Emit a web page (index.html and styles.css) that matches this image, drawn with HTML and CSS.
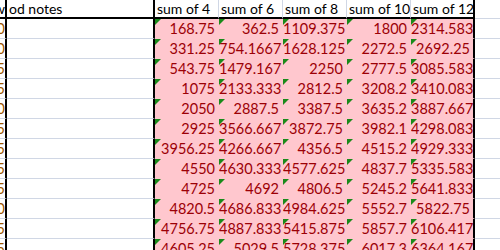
FILE: index.html
```html
<!DOCTYPE html>
<html>
<head>
<meta charset="utf-8">
<link rel="stylesheet" href="styles.css">
</head>
<body>
<div class="sheet">
  <div class="c a head"><span>w</span></div><div class="c notes head">od notes</div>
  <div class="c h">sum of 4</div><div class="c h">sum of 6</div><div class="c h">sum of 8</div><div class="c h">sum of 10</div><div class="c h last">sum of 12</div><div class="c fill head-fill"></div>

  <div class="c a"><span>0</span></div><div class="c notes"></div>
  <div class="c v">168.75</div><div class="c v">362.5</div><div class="c v">1109.375</div><div class="c v">1800</div><div class="c v last">2314.583</div><div class="c fill"></div>

  <div class="c a"><span>0</span></div><div class="c notes"></div>
  <div class="c v">331.25</div><div class="c v">754.1667</div><div class="c v">1628.125</div><div class="c v">2272.5</div><div class="c v last">2692.25</div><div class="c fill"></div>

  <div class="c a"><span>5</span></div><div class="c notes"></div>
  <div class="c v">543.75</div><div class="c v">1479.167</div><div class="c v">2250</div><div class="c v">2777.5</div><div class="c v last">3085.583</div><div class="c fill"></div>

  <div class="c a"><span>5</span></div><div class="c notes"></div>
  <div class="c v">1075</div><div class="c v">2133.333</div><div class="c v">2812.5</div><div class="c v">3208.2</div><div class="c v last">3410.083</div><div class="c fill"></div>

  <div class="c a"><span>0</span></div><div class="c notes"></div>
  <div class="c v">2050</div><div class="c v">2887.5</div><div class="c v">3387.5</div><div class="c v">3635.2</div><div class="c v last">3887.667</div><div class="c fill"></div>

  <div class="c a"><span>5</span></div><div class="c notes"></div>
  <div class="c v">2925</div><div class="c v">3566.667</div><div class="c v">3872.75</div><div class="c v">3982.1</div><div class="c v last">4298.083</div><div class="c fill"></div>

  <div class="c a"><span>5</span></div><div class="c notes"></div>
  <div class="c v">3956.25</div><div class="c v">4266.667</div><div class="c v">4356.5</div><div class="c v">4515.2</div><div class="c v last">4929.333</div><div class="c fill"></div>

  <div class="c a"><span>5</span></div><div class="c notes"></div>
  <div class="c v">4550</div><div class="c v">4630.333</div><div class="c v">4577.625</div><div class="c v">4837.7</div><div class="c v last">5335.583</div><div class="c fill"></div>

  <div class="c a"><span>5</span></div><div class="c notes"></div>
  <div class="c v">4725</div><div class="c v">4692</div><div class="c v">4806.5</div><div class="c v">5245.2</div><div class="c v last">5641.833</div><div class="c fill"></div>

  <div class="c a"><span>0</span></div><div class="c notes"></div>
  <div class="c v">4820.5</div><div class="c v">4686.833</div><div class="c v">4984.625</div><div class="c v">5552.7</div><div class="c v last">5822.75</div><div class="c fill"></div>

  <div class="c a"><span>5</span></div><div class="c notes"></div>
  <div class="c v">4756.75</div><div class="c v">4887.833</div><div class="c v">5415.875</div><div class="c v">5857.7</div><div class="c v last">6106.417</div><div class="c fill"></div>

  <div class="c a"><span>5</span></div><div class="c notes"></div>
  <div class="c v">4605.25</div><div class="c v">5029.5</div><div class="c v">5728.375</div><div class="c v">6017.3</div><div class="c v last">6364.167</div><div class="c fill"></div>
</div>
</body>
</html>
```

FILE: styles.css
```css
html, body {
  margin: 0;
  padding: 0;
  background: #ffffff;
  overflow: hidden;
}

.sheet {
  display: grid;
  grid-template-columns: 7px 148px repeat(5, 64px) 1fr;
  grid-template-rows: 19px repeat(12, 20px);
  width: 500px;
  font-family: "Lato", "Liberation Sans", sans-serif;
  font-size: 14px;
  color: #000000;
}

.c {
  box-sizing: border-box;
  border-right: 1px solid #d0d7e5;
  border-bottom: 1px solid #d0d7e5;
  line-height: 19px;
  white-space: nowrap;
  overflow: hidden;
  position: relative;
}

.a {
  display: flex;
  justify-content: flex-end;
  border-right: 2px solid #000000;
  color: #9c5700;
  font-size: 14.5px;
}

.a span {
  flex: none;
}

.a.head {
  color: #000000;
  font-size: 14px;
}

.notes {
  border-right: 2px solid #000000;
  padding-left: 2px;
}

.head, .h {
  border-bottom: 2px solid #000000;
  line-height: 17px;
}

.h {
  padding-left: 2px;
}

.head-fill {
  line-height: 18px;
}

.v {
  background: #ffc7ce;
  border-right-color: #ffc7ce;
  border-bottom-color: #ffc7ce;
  color: #9c0006;
  text-align: right;
  padding-right: 3px;
  font-size: 14.5px;
}

.v::before {
  content: "";
  position: absolute;
  left: 0;
  top: 0;
  width: 6px;
  height: 6px;
  background: #1a8a1a;
  clip-path: polygon(0 0, 100% 0, 0 100%);
}

.last {
  border-right: 2px solid #000000;
}

.v.last {
  border-right-color: #000000;
}

.fill {
  border-right: none;
}
```
